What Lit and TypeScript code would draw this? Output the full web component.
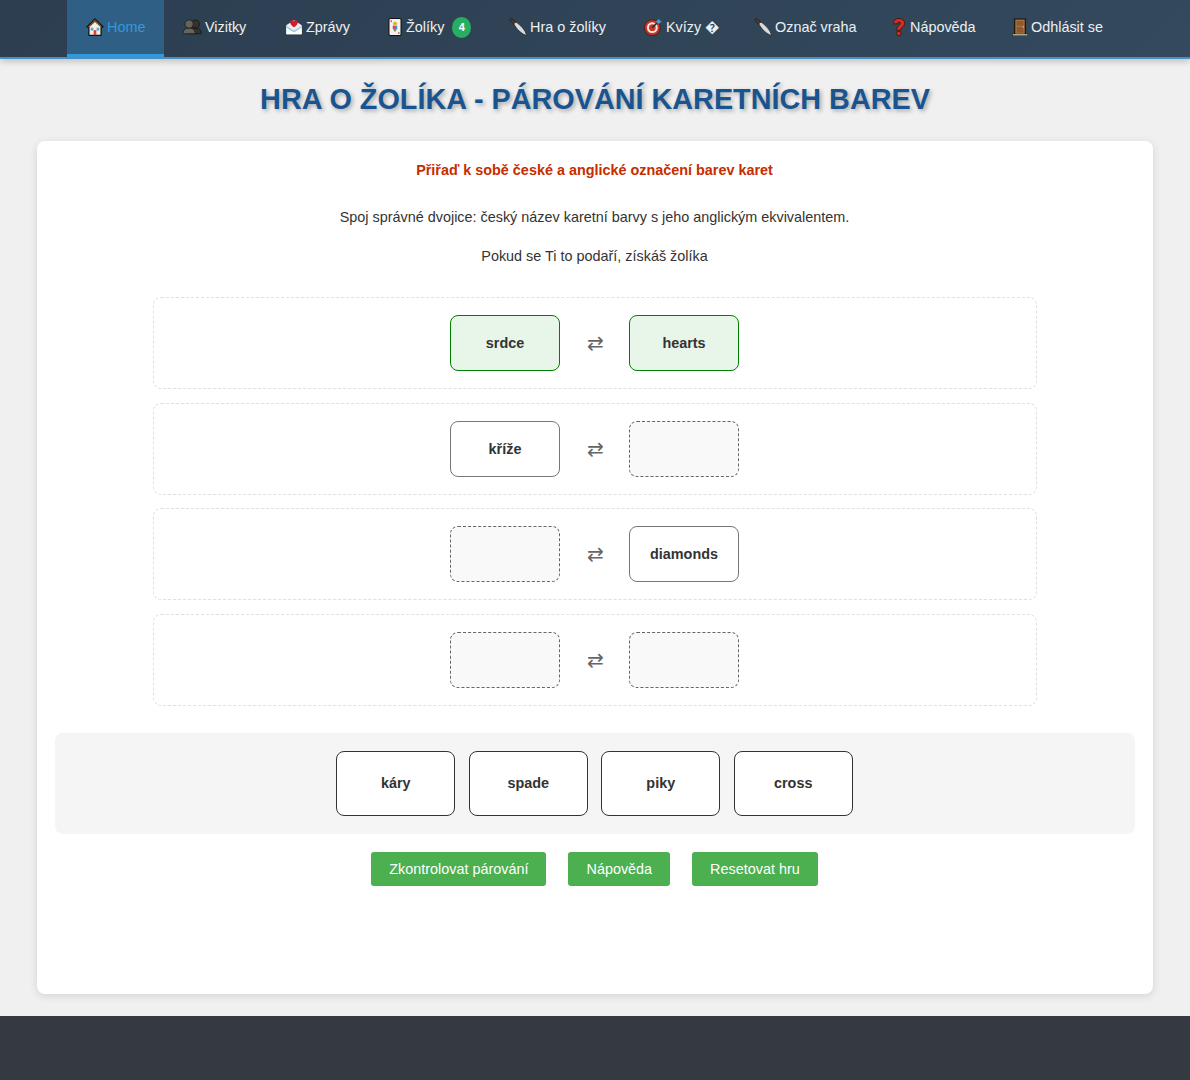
import { LitElement, html, css, svg } from "lit";
import { customElement } from "lit/decorators.js";

const icons: Record<string, unknown> = {
  home: svg`<path d="M8 .8 L.8 8 L2.6 8 L2.6 15.4 L13.4 15.4 L13.4 8 L15.2 8 Z" fill="#f4efe2" stroke="#141008" stroke-width="1.1" stroke-linejoin="round"/><path d="M8 1.4 L1.6 7.8 L3.4 7.8 L8 3.6 L12.6 7.8 L14.4 7.8 Z" fill="#6d4225"/><rect x="4.2" y="8.6" width="2.4" height="2.6" fill="#4fb0e0"/><rect x="9.4" y="8.6" width="2.4" height="2.6" fill="#4fb0e0"/><rect x="6.8" y="10.8" width="2.4" height="4.4" fill="#d8483a"/>`,
  people: svg`<circle cx="11" cy="5.4" r="3.6" fill="#33322c" stroke="#111" stroke-width=".6"/><path d="M5.5 14 C5.5 10 8 9 11 9 C14 9 16.2 10 16.2 14 Z" fill="#33322c" stroke="#111" stroke-width=".6"/><circle cx="5.4" cy="5.4" r="3.7" fill="#66655a" stroke="#1c1c18" stroke-width=".7"/><path d="M0 14 C0 10 2.6 9 5.4 9 C8.4 9 10.8 10 10.8 14 Z" fill="#66655a" stroke="#1c1c18" stroke-width=".7"/>`,
  mail: svg`<path d="M.8 6.2 L8 1.6 L15.2 6.2 L15.2 14.8 L.8 14.8 Z" fill="#e8eef2" stroke="#20262b" stroke-width=".6"/><path d="M1.2 6.8 L8 11.2 L14.8 6.8 L14.8 14.4 L1.2 14.4 Z" fill="#fff"/><path d="M1.2 6.8 L8 11 L14.8 6.8 L14.8 8.4 L8 12.8 L1.2 8.4 Z" fill="#9fc6de"/><path d="M8 8.2 C4.8 6 4.2 4.4 4.9 3 C5.8 1.6 7.4 1.8 8 3.1 C8.6 1.8 10.2 1.6 11.1 3 C11.8 4.4 11.2 6 8 8.2 Z" fill="#d9182c"/>`,
  card: svg`<rect x="2.6" y=".4" width="10.8" height="15.2" rx="1.2" fill="#f4f2ec" stroke="#111" stroke-width="1"/><path d="M6 4.4 L8 3.2 L10 4.4 L9.2 6.4 L6.8 6.4 Z" fill="#e0b030"/><rect x="6" y="6.8" width="2" height="3" fill="#d84a5a"/><rect x="8" y="6.8" width="2" height="3" fill="#4a8fd0"/><path d="M6.2 9.8 L8 12.6 L9.8 9.8 Z" fill="#58a860"/><rect x="4" y="2" width="1.2" height="1.6" fill="#d84a5a"/><rect x="10.8" y="12.6" width="1.2" height="1.6" fill="#d84a5a"/>`,
  knife: svg`<path d="M.6 1.6 L2 .4 L6.4 4 L4.4 6 Z" fill="#5a3826" stroke="#1e120c" stroke-width=".6"/><path d="M4.2 5.2 L6.2 3.6 C10.4 6.4 14.6 10.8 15.6 15.6 C11 14 7 10.4 4.2 5.2 Z" fill="#d8dcde" stroke="#23282a" stroke-width=".7"/>`,
  target: svg`<circle cx="7.4" cy="8.6" r="7" fill="#cf3324" stroke="#4a120c" stroke-width=".7"/><circle cx="7.4" cy="8.6" r="4.8" fill="#f1ede6"/><circle cx="7.4" cy="8.6" r="3" fill="#cf3324"/><path d="M7.4 8.6 L13 3" stroke="#2b2f33" stroke-width="1.4"/><path d="M10.6 3.4 L13.2 .6 L14 2.2 L15.9 2.8 L13 5.4 Z" fill="#3fa0e0"/>`,
  q: svg`<path d="M3 5.2 C3 2 5.2 .4 8 .4 C11.2 .4 13 2.4 13 4.8 C13 7.2 11.2 8 10 9 C9.6 9.4 9.6 10 9.6 11 L6 11 C6 9 6.2 8 7.6 6.8 C8.6 6 9.2 5.6 9.2 4.8 C9.2 4 8.7 3.6 8 3.6 C7.2 3.6 6.8 4.2 6.8 5.2 Z" fill="#d1301f" stroke="#3f0e08" stroke-width=".7"/><circle cx="7.8" cy="13.8" r="2" fill="#d1301f" stroke="#3f0e08" stroke-width=".7"/>`,
  door: svg`<rect x="2.6" y=".4" width="10.8" height="14.2" fill="#1d1a16"/><rect x="3.8" y="1.4" width="8.4" height="12.8" fill="#a8703e"/><rect x="5" y="2.8" width="6" height="4" fill="#8c5a30"/><rect x="5" y="8" width="6" height="5" fill="#8c5a30"/><circle cx="10.9" cy="8" r=".6" fill="#e6c870"/><rect x="1.4" y="14.2" width="13.2" height="1.6" fill="#d8c8a8" stroke="#1d1a16" stroke-width=".4"/>`,
};

const nav = [
  { icon: "home", label: "Home", active: true, w: 97, box: 16 },
  { icon: "people", label: "Vizitky", w: 102, box: 18 },
  { icon: "mail", label: "Zprávy", w: 102, box: 17 },
  { icon: "card", label: "Žolíky", badge: "4", w: 122, box: 15 },
  { icon: "knife", label: "Hra o žolíky", w: 135, box: 17 },
  { icon: "target", label: "Kvízy �", w: 110, box: 18 },
  { icon: "knife", label: "Označ vraha", w: 138, box: 17 },
  { icon: "q", label: "Nápověda", w: 120, box: 14 },
  { icon: "door", label: "Odhlásit se", box: 15 },
];

type Slot = { t?: string; kind: "ok" | "plain" | "empty" };
const rows: [Slot, Slot][] = [
  [{ t: "srdce", kind: "ok" }, { t: "hearts", kind: "ok" }],
  [{ t: "kříže", kind: "plain" }, { kind: "empty" }],
  [{ kind: "empty" }, { t: "diamonds", kind: "plain" }],
  [{ kind: "empty" }, { kind: "empty" }],
];

@customElement("app-root")
export class AppRoot extends LitElement {
  static styles = css`
    :host { display: block; font-family: "Liberation Sans", Arial, sans-serif; background: #f0f0f0; color: #333; }
    * { box-sizing: border-box; }
    .nav { position: relative; display: flex; height: 59px; padding-left: 67px; background: linear-gradient(135deg, #2c3e50, #34495e); border-bottom: 2px solid #4a8fc4; box-shadow: 0 3px 6px rgba(0,0,0,.18); }
    .item { display: flex; align-items: center; height: 57px; padding: 0 19px 3px 19px; font-size: 14.4px; line-height: 17px; color: #ecf0f1; white-space: nowrap; flex: none; }
    .item.active { background: #2f5f85; color: #3498db; padding: 0 19px 0 20px; border-bottom: 3px solid #3498db; }
    .ico { display: flex; justify-content: center; flex: none; height: 18px; margin-right: 4px; }
    .ico svg { width: 18px; height: 18px; flex: none; overflow: visible; }
    .badge { display: inline-flex; align-items: center; justify-content: center; width: 21px; height: 21px; border-radius: 50%; margin-left: 8px; background: #27ae60; color: #fff; font-size: 11px; font-weight: 700; }
    h1 { margin: 0; padding: 21px 0 23px; height: 82px; text-align: center; font-size: 28.8px; line-height: 38px; font-weight: 700; color: #1a5490; text-shadow: 2px 2px 4px rgba(0,0,0,.3); }
    .card { margin: 0 37px; height: 853px; padding: 21px 18px 0; background: #fff; border-radius: 8px; box-shadow: 0 2px 8px rgba(0,0,0,.12); text-align: center; }
    .lead { margin: 0; padding-right: 1px; font-size: 14.4px; line-height: 16px; font-weight: 700; color: #c62d00; }
    .p { margin: 0; padding-right: 1px; font-size: 14.4px; line-height: 16px; color: #333; }
    .p.one { margin-top: 31px; }
    .p.two { margin-top: 23px; }
    .rows { display: flex; flex-direction: column; gap: 13.67px; width: 884px; margin: 33px auto 0; }
    .row { display: flex; align-items: center; justify-content: center; height: 92px; padding-right: 1px; border: 1px dashed #e0e0e0; border-radius: 8px; }
    .tile { display: flex; align-items: center; justify-content: center; width: 110px; height: 56px; border-radius: 8px; font-size: 14.4px; font-weight: 700; color: #333; }
    .plain { background: #fff; border: 1px solid #777; }
    .ok { background: #e8f5e9; border: 1px solid #008000; }
    .empty { background: #f9f9f9; border: 1px dashed #666; }
    .arrow { width: 69px; padding-left: 2px; text-align: center; font-family: "DejaVu Sans", sans-serif; font-size: 20px; line-height: 20px; color: #666; }
    .bank { display: flex; justify-content: center; gap: 13.7px; height: 101px; margin-top: 27px; padding: 18px 1px 0 0; background: #f5f5f5; border-radius: 8px; }
    .chip { display: flex; align-items: center; justify-content: center; width: 118.8px; height: 65px; background: #fff; border: 1px solid #333; border-radius: 8px; font-size: 14.4px; font-weight: 700; color: #333; }
    .actions { display: flex; justify-content: center; gap: 22px; margin-top: 18px; padding-right: 1px; }
    .btn { height: 34px; padding: 0 18px; display: flex; align-items: center; background: #4caf50; color: #fff; border-radius: 3px; font-size: 14.4px; }
    .footer { height: 64px; margin-top: 22px; background: #343a40; }
  `;

  private slot_(s: Slot) {
    return html`<div class="tile ${s.kind}">${s.t ?? ""}</div>`;
  }

  render() {
    return html`
      <nav class="nav">
        ${nav.map(
          (n) => html`<div class="item ${n.active ? "active" : ""}" style=${n.w ? `width:${n.w}px` : ""}>
            <span class="ico" style="width:${n.box}px"><svg viewBox="0 0 16 16">${icons[n.icon]}</svg></span><span>${n.label}</span>
            ${n.badge ? html`<span class="badge">${n.badge}</span>` : ""}
          </div>`
        )}
      </nav>
      <h1>HRA O ŽOLÍKA - PÁROVÁNÍ KARETNÍCH BAREV</h1>
      <main class="card">
        <p class="lead">Přiřaď k sobě české a anglické označení barev karet</p>
        <p class="p one">Spoj správné dvojice: český název karetní barvy s jeho anglickým ekvivalentem.</p>
        <p class="p two">Pokud se Ti to podaří, získáš žolíka</p>
        <div class="rows">
          ${rows.map(
            ([a, b]) => html`<div class="row">${this.slot_(a)}<div class="arrow">⇄</div>${this.slot_(b)}</div>`
          )}
        </div>
        <div class="bank">
          ${["káry", "spade", "piky", "cross"].map((c) => html`<div class="chip">${c}</div>`)}
        </div>
        <div class="actions">
          ${["Zkontrolovat párování", "Nápověda", "Resetovat hru"].map((b) => html`<div class="btn">${b}</div>`)}
        </div>
      </main>
      <footer class="footer"></footer>
    `;
  }
}
